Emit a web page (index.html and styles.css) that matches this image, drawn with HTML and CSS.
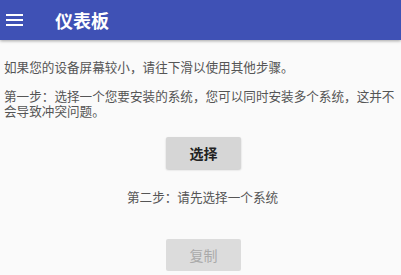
FILE: index.html
```html
<!DOCTYPE html>
<html lang="zh-CN">
<head>
<meta charset="utf-8">
<link rel="stylesheet" href="styles.css">
</head>
<body>
<header class="appbar">
  <svg class="menu" width="17" height="12" viewBox="0 0 17 12"><rect x="0" y="0" width="17" height="2" fill="#fff"/><rect x="0" y="5" width="17" height="2" fill="#fff"/><rect x="0" y="10" width="17" height="2" fill="#fff"/></svg>
  <h1 class="title">仪表板</h1>
</header>
<main class="content">
  <p class="text">如果您的设备屏幕较小，请往下滑以使用其他步骤。</p>
  <p class="text">第一步：选择一个您要安装的系统，您可以同时安装多个系统，这并不会导致冲突问题。</p>
  <div class="center"><button class="btn">选择</button></div>
  <p class="text step2">第二步：请先选择一个系统</p>
  <div class="center"><button class="btn disabled" disabled>复制</button></div>
</main>
</body>
</html>
```
FILE: styles.css
```css
html, body {
  margin: 0;
  padding: 0;
  background: #fafafa;
  font-family: "Noto Sans CJK SC", "Noto Sans", sans-serif;
  overflow: hidden;
}
.appbar {
  height: 40px;
  background: #3f51b5;
  display: flex;
  align-items: center;
  box-shadow: 0 1px 3px rgba(0,0,0,0.35);
}
.menu {
  margin-left: 6px;
  display: block;
}
.title {
  margin: 0 0 0 32px;
  color: #fff;
  font-size: 18px;
  font-weight: bold;
  line-height: 22px;
}
.content {
  padding: 19px 6px 0 4px;
}
.text {
  margin: 0 0 14px;
  font-size: 12.6px;
  line-height: 15px;
  color: #555;
}
.center {
  display: flex;
  justify-content: center;
}
.btn {
  width: 75px;
  height: 32px;
  margin: 5px 0 0 8px;
  border: none;
  border-radius: 2px;
  background: #d6d6d6;
  color: #222;
  font-family: inherit;
  font-size: 14px;
  font-weight: bold;
  box-shadow: 0 1px 2px rgba(0,0,0,0.2);
}
.step2 {
  text-align: center;
  margin: 20px 0 35px;
  padding-left: 6px;
}
.btn.disabled {
  margin-top: 0;
  background: #dcdcdc;
  color: #aaa;
  box-shadow: none;
  font-weight: normal;
}
```
